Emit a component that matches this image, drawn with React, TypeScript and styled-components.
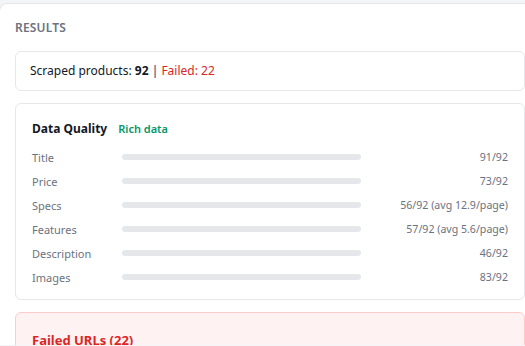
import React from "react";
import styled, { createGlobalStyle } from "styled-components";

const Global = createGlobalStyle`
  html, body { margin: 0; padding: 0; background: #f3f4f6; overflow: hidden; }
  body { font-family: "Noto Sans", "Open Sans", sans-serif; }
`;

const Panel = styled.div`
  margin: 3px -16px 0 -1px;
  background: #ffffff;
  border-top: 1px solid #e5e7eb;
  border-left: 1px solid #e5e7eb;
  border-radius: 8px 8px 0 0;
  padding: 14px 16px 0 15px;
  height: 342px;
  box-sizing: border-box;
  overflow: hidden;
  display: flex;
  flex-direction: column;
  gap: 12px;
`;

const Heading = styled.div`
  font-size: 12px;
  font-weight: 600;
  letter-spacing: 0.2px;
  color: #6b7280;
  text-transform: uppercase;
  line-height: 20px;
  margin-bottom: 1px;
`;

const Card = styled.div<{ $tone?: "danger" }>`
  border: 1px solid ${(p) => (p.$tone === "danger" ? "#fecaca" : "#e5e7eb")};
  background: ${(p) => (p.$tone === "danger" ? "#fef2f2" : "#ffffff")};
  border-radius: 6px;
  flex-shrink: 0;
`;

const SummaryCard = styled(Card)`
  padding: 10px 14px;
  font-size: 12px;
  line-height: 18px;
  color: #111827;
`;

const Strong = styled.b`
  font-weight: 700;
`;

const Sep = styled.span`
  color: #6b7280;
  font-weight: 700;
`;

const FailText = styled.span`
  color: #dc2626;
`;

const QualityCard = styled(Card)`
  padding: 15px 16px 12px 16px;
`;

const TitleRow = styled.div`
  display: flex;
  align-items: baseline;
  gap: 11px;
  line-height: 20px;
  margin-bottom: 8px;
`;

const Title = styled.span`
  font-size: 12px;
  font-weight: 700;
  color: #111827;
`;

const Badge = styled.span`
  font-size: 11px;
  font-weight: 600;
  color: #059669;
`;

const Rows = styled.div`
  display: flex;
  flex-direction: column;
  gap: 4px;
`;

const Row = styled.div`
  display: grid;
  grid-template-columns: 90px 239px 1fr;
  align-items: center;
  height: 20px;
`;

const Label = styled.span`
  font-size: 11px;
  color: #6b7280;
`;

const Track = styled.div`
  height: 6px;
  background: #e5e7eb;
  border-radius: 3px;
  overflow: hidden;
`;

const Value = styled.span`
  font-size: 10.6px;
  color: #6b7280;
  text-align: right;
`;

const FailCard = styled(Card)`
  padding: 17px 16px;
`;

const FailTitle = styled.div`
  font-size: 13px;
  font-weight: 700;
  color: #dc2626;
  line-height: 20px;
`;

const rows = [
  { label: "Title", value: "91/92" },
  { label: "Price", value: "73/92" },
  { label: "Specs", value: "56/92 (avg 12.9/page)" },
  { label: "Features", value: "57/92 (avg 5.6/page)" },
  { label: "Description", value: "46/92" },
  { label: "Images", value: "83/92" },
];

export default function App() {
  return (
    <>
      <Global />
      <Panel>
        <Heading>Results</Heading>
        <SummaryCard>
          Scraped products: <Strong>92</Strong> <Sep>|</Sep> <FailText>Failed: 22</FailText>
        </SummaryCard>
        <QualityCard>
          <TitleRow>
            <Title>Data Quality</Title>
            <Badge>Rich data</Badge>
          </TitleRow>
          <Rows>
            {rows.map((r) => (
              <Row key={r.label}>
                <Label>{r.label}</Label>
                <Track />
                <Value>{r.value}</Value>
              </Row>
            ))}
          </Rows>
        </QualityCard>
        <FailCard $tone="danger">
          <FailTitle>Failed URLs (22)</FailTitle>
        </FailCard>
      </Panel>
    </>
  );
}
